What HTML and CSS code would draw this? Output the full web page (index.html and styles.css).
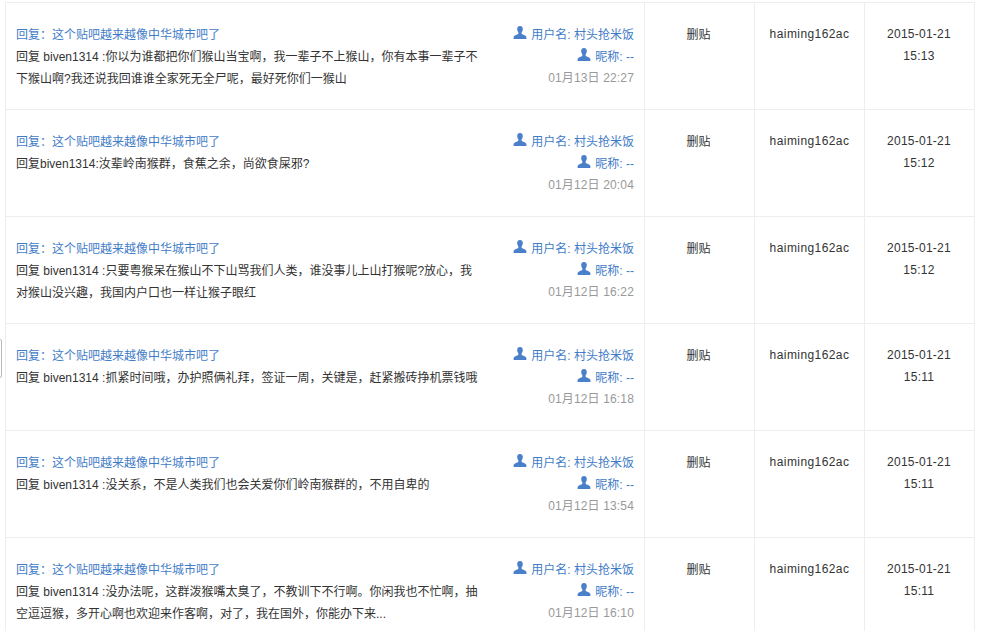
FILE: index.html
```html
<!DOCTYPE html>
<html lang="zh">
<head>
<meta charset="utf-8">
<title>回复列表</title>
<link rel="stylesheet" href="styles.css">
</head>
<body>
<svg class="defs" width="0" height="0"><symbol id="user" viewBox="0 0 14 14"><path d="M7 0C5.200 0 4.200 1.300 4.200 3.100C4.200 4.700 4.800 5.800 5.400 6.500C5.500 7.300 5.400 7.900 4.800 8.300C3.400 9.100 1.200 9.400 .6 11V13H13.400V11C12.800 9.400 10.600 9.100 9.200 8.300C8.600 7.900 8.500 7.300 8.600 6.500C9.200 5.800 9.800 4.700 9.800 3.100C9.800 1.300 8.800 0 7 0Z"/></symbol></svg>
<div class="handle"></div>
<table class="list">
<colgroup><col class="c-main"><col class="c-act"><col class="c-user"><col class="c-time"></colgroup>
<tbody>
<tr>
<td><div class="post"><div class="body"><a class="title">回复：这个贴吧越来越像中华城市吧了</a><p>回复 biven1314 :你以为谁都把你们猴山当宝啊，我一辈子不上猴山，你有本事一辈子不下猴山啊?我还说我回谁谁全家死无全尸呢，最好死你们一猴山</p></div><div class="meta"><a><svg class="ico"><use href="#user"/></svg>用户名: 村头抢米饭</a><a><svg class="ico"><use href="#user"/></svg>昵称: --</a><span class="date">01月13日 22:27</span></div></div></td>
<td class="act">删贴</td><td class="name">haiming162ac</td><td class="time">2015-01-21<br>15:13</td>
</tr>
<tr>
<td><div class="post"><div class="body"><a class="title">回复：这个贴吧越来越像中华城市吧了</a><p>回复biven1314:汝辈岭南猴群，食蕉之余，尚欲食屎邪?</p></div><div class="meta"><a><svg class="ico"><use href="#user"/></svg>用户名: 村头抢米饭</a><a><svg class="ico"><use href="#user"/></svg>昵称: --</a><span class="date">01月12日 20:04</span></div></div></td>
<td class="act">删贴</td><td class="name">haiming162ac</td><td class="time">2015-01-21<br>15:12</td>
</tr>
<tr>
<td><div class="post"><div class="body"><a class="title">回复：这个贴吧越来越像中华城市吧了</a><p>回复 biven1314 :只要粤猴呆在猴山不下山骂我们人类，谁没事儿上山打猴呢?放心，我对猴山没兴趣，我国内户口也一样让猴子眼红</p></div><div class="meta"><a><svg class="ico"><use href="#user"/></svg>用户名: 村头抢米饭</a><a><svg class="ico"><use href="#user"/></svg>昵称: --</a><span class="date">01月12日 16:22</span></div></div></td>
<td class="act">删贴</td><td class="name">haiming162ac</td><td class="time">2015-01-21<br>15:12</td>
</tr>
<tr>
<td><div class="post"><div class="body"><a class="title">回复：这个贴吧越来越像中华城市吧了</a><p>回复 biven1314 :抓紧时间哦，办护照俩礼拜，签证一周，关键是，赶紧搬砖挣机票钱哦</p></div><div class="meta"><a><svg class="ico"><use href="#user"/></svg>用户名: 村头抢米饭</a><a><svg class="ico"><use href="#user"/></svg>昵称: --</a><span class="date">01月12日 16:18</span></div></div></td>
<td class="act">删贴</td><td class="name">haiming162ac</td><td class="time">2015-01-21<br>15:11</td>
</tr>
<tr>
<td><div class="post"><div class="body"><a class="title">回复：这个贴吧越来越像中华城市吧了</a><p>回复 biven1314 :没关系，不是人类我们也会关爱你们岭南猴群的，不用自卑的</p></div><div class="meta"><a><svg class="ico"><use href="#user"/></svg>用户名: 村头抢米饭</a><a><svg class="ico"><use href="#user"/></svg>昵称: --</a><span class="date">01月12日 13:54</span></div></div></td>
<td class="act">删贴</td><td class="name">haiming162ac</td><td class="time">2015-01-21<br>15:11</td>
</tr>
<tr>
<td><div class="post"><div class="body"><a class="title">回复：这个贴吧越来越像中华城市吧了</a><p>回复 biven1314 :没办法呢，这群泼猴嘴太臭了，不教训下不行啊。你闲我也不忙啊，抽空逗逗猴，多开心啊也欢迎来作客啊，对了，我在国外，你能办下来...</p></div><div class="meta"><a><svg class="ico"><use href="#user"/></svg>用户名: 村头抢米饭</a><a><svg class="ico"><use href="#user"/></svg>昵称: --</a><span class="date">01月12日 16:10</span></div></div></td>
<td class="act">删贴</td><td class="name">haiming162ac</td><td class="time">2015-01-21<br>15:11</td>
</tr>
</tbody>
</table>
</body>
</html>
```
FILE: styles.css
```css
html, body {
  margin: 0;
  height: 631px;
  overflow: hidden;
  background: #fff;
}
body {
  padding: 2px 0 0 5px;
  box-sizing: border-box;
  font: 12px/22px "Liberation Sans", "Noto Sans CJK SC", sans-serif;
  color: #333;
}
.defs { position: absolute; }
.handle {
  position: absolute;
  left: -3px;
  top: 339px;
  width: 3px;
  height: 37px;
  border: 1px solid #bbb;
  border-radius: 2px;
  background: #fff;
}
.list {
  border-collapse: collapse;
  table-layout: fixed;
  width: 970px;
}
.c-main { width: 639px; }
.c-act, .c-user, .c-time { width: 110px; }
.list td {
  border: 1px solid #eee;
  padding: 20px 10px;
  height: 66px;
  vertical-align: top;
  text-align: center;
}
.list td.act { padding: 21px 10px 19px 8px; }
.list td.name { letter-spacing: .42px; }
.list td.time { letter-spacing: .25px; padding-right: 11px; }
.post {
  display: flex;
  justify-content: space-between;
  text-align: left;
  height: 66px;
}
.body { width: 463px; padding-top: 1px; }
.title { color: #3f7cc8; display: block; }
.body p { margin: 0; word-break: break-all; }
.meta {
  display: flex;
  flex-direction: column;
  align-items: flex-end;
  padding-top: 1px;
  color: #3f7cc8;
}
.ico {
  width: 14px;
  height: 14px;
  margin-right: 4px;
  vertical-align: -1px;
  fill: #4a7fc9;
}
.date {
  color: #999;
  margin-top: -1px;
  letter-spacing: .15px;
}
```
